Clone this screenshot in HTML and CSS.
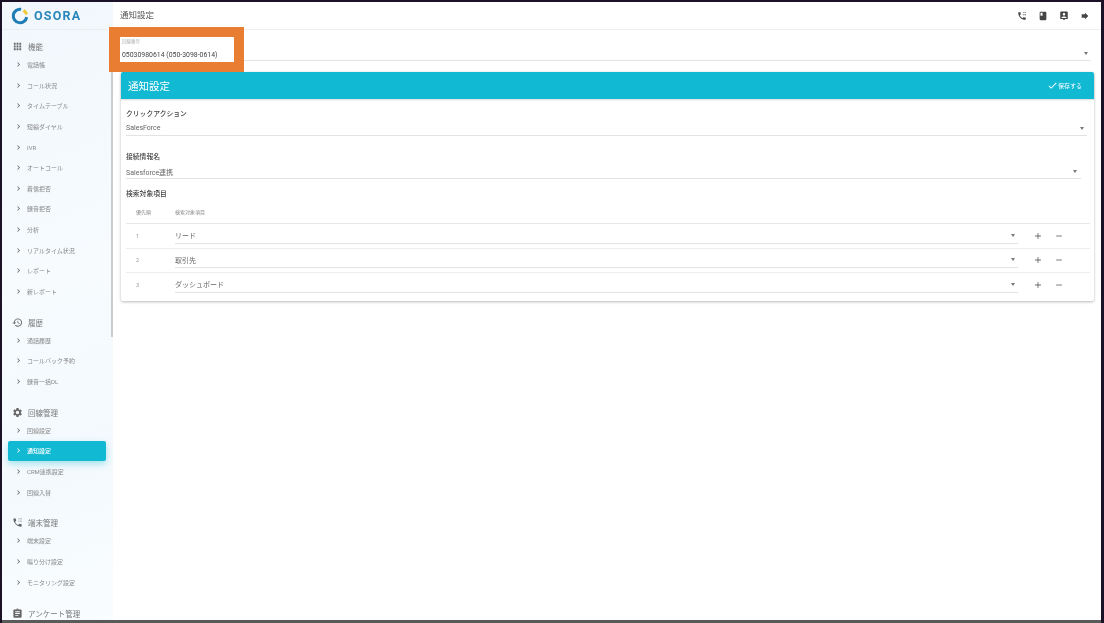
FILE: index.html
```html
<!DOCTYPE html>
<html lang="ja">
<head>
  <meta charset="UTF-8">
  <title>通知設定</title>
  <meta name="viewport" content="width=device-width, initial-scale=1.0">
  <link rel="stylesheet" href="styles.css">
</head>
<body>
  <svg class="defs" width="0" height="0">
    <symbol id="i-chev" viewBox="0 0 24 24"><path d="M10 6L8.59 7.41 13.17 12l-4.58 4.59L10 18l6-6z"/></symbol>
    <symbol id="i-apps" viewBox="0 0 24 24"><path d="M4 8h4V4H4v4zm6 12h4v-4h-4v4zm-6 0h4v-4H4v4zm0-6h4v-4H4v4zm6 0h4v-4h-4v4zm6-10v4h4V4h-4zm-6 4h4V4h-4v4zm6 6h4v-4h-4v4zm0 6h4v-4h-4v4z"/></symbol>
    <symbol id="i-history" viewBox="0 0 24 24"><path d="M13 3c-4.97 0-9 4.03-9 9H1l3.89 3.89.07.14L9 12H6c0-3.87 3.13-7 7-7s7 3.13 7 7-3.13 7-7 7c-1.93 0-3.68-.79-4.94-2.06l-1.42 1.42C8.27 19.99 10.51 21 13 21c4.97 0 9-4.03 9-9s-4.03-9-9-9zm-1 5v5l4.28 2.54.72-1.21-3.5-2.08V8H12z"/></symbol>
    <symbol id="i-gear" viewBox="0 0 24 24"><path d="M19.14 12.94c.04-.3.06-.61.06-.94 0-.32-.02-.64-.07-.94l2.03-1.58c.18-.14.23-.41.12-.61l-1.92-3.32c-.12-.22-.37-.29-.59-.22l-2.39.96c-.5-.38-1.03-.7-1.62-.94l-.36-2.54c-.04-.24-.24-.41-.48-.41h-3.84c-.24 0-.43.17-.47.41l-.36 2.54c-.59.24-1.13.57-1.62.94l-2.39-.96c-.22-.08-.47 0-.59.22L2.74 8.87c-.12.21-.08.47.12.61l2.03 1.58c-.05.3-.09.63-.09.94s.02.64.07.94l-2.03 1.58c-.18.14-.23.41-.12.61l1.92 3.32c.12.22.37.29.59.22l2.39-.96c.5.38 1.03.7 1.62.94l.36 2.54c.05.24.24.41.48.41h3.84c.24 0 .44-.17.47-.41l.36-2.54c.59-.24 1.13-.56 1.62-.94l2.39.96c.22.08.47 0 .59-.22l1.92-3.32c.12-.22.07-.47-.12-.61l-2.01-1.58zM12 15.6c-1.98 0-3.6-1.62-3.6-3.6s1.62-3.6 3.6-3.6 3.6 1.62 3.6 3.6-1.62 3.6-3.6 3.6z"/></symbol>
    <symbol id="i-phone" viewBox="0 0 24 24"><path d="M20 15.5c-1.25 0-2.45-.2-3.57-.57-.35-.11-.74-.03-1.02.24l-2.2 2.2c-2.83-1.44-5.15-3.75-6.59-6.59l2.2-2.21c.28-.26.36-.65.25-1C8.7 6.45 8.5 5.25 8.5 4c0-.55-.45-1-1-1H4c-.55 0-1 .45-1 1 0 9.39 7.61 17 17 17 .55 0 1-.45 1-1v-3.5c0-.55-.45-1-1-1zM14 3h2v2h-2zM18 3h3v2h-3zM14 8h2v2h-2zM18 8h3v2h-3z"/></symbol>
    <symbol id="i-clip" viewBox="0 0 24 24"><path d="M19 3h-4.18C14.4 1.84 13.3 1 12 1c-1.3 0-2.4.84-2.82 2H5c-1.1 0-2 .9-2 2v14c0 1.1.9 2 2 2h14c1.1 0 2-.9 2-2V5c0-1.1-.9-2-2-2zm-7 0c.55 0 1 .45 1 1s-.45 1-1 1-1-.45-1-1 .45-1 1-1zm2 14H7v-2h7v2zm3-4H7v-2h10v2zm0-4H7V7h10v2z"/></symbol>
    <symbol id="i-book" viewBox="0 0 24 24"><path d="M18 2H6c-1.1 0-2 .9-2 2v16c0 1.1.9 2 2 2h12c1.1 0 2-.9 2-2V4c0-1.1-.9-2-2-2zM6 4h5v8l-2.5-1.5L6 12V4z"/></symbol>
    <symbol id="i-contact" viewBox="0 0 24 24"><path d="M3 3v16h6l3 3 3-3h6V3c0-1.1-.9-2-2-2H5c-1.1 0-2 .9-2 2zm12 5c0 1.66-1.34 3-3 3s-3-1.34-3-3 1.34-3 3-3 3 1.34 3 3zm-9 8c0-2 4-3.1 6-3.1s6 1.1 6 3.1v1H6v-1z"/></symbol>
    <symbol id="i-forward" viewBox="0 0 24 24"><path d="M12 8V4l8 8-8 8v-4H4V8z"/></symbol>
    <symbol id="i-plus" viewBox="0 0 24 24"><path d="M19 13h-6v6h-2v-6H5v-2h6V5h2v6h6v2z"/></symbol>
    <symbol id="i-minus" viewBox="0 0 24 24"><path d="M19 13H5v-2h14v2z"/></symbol>
    <symbol id="i-check" viewBox="0 0 24 24"><path d="M9 16.17L4.83 12l-1.42 1.41L9 19 21 7l-1.41-1.41z"/></symbol>
  </svg>

  <div class="frame">
    <aside class="sidebar">
      <div class="logo">
        <svg class="logo-mark" viewBox="0 0 24 24">
          <path d="M13.5 3.1a9 9 0 1 0 7.4 10.4" fill="none" stroke="#1f7db5" stroke-width="4"/>
          <path d="M16.5 4.5a9 9 0 0 1 4.4 5.5" fill="none" stroke="#f3c93a" stroke-width="4"/>
        </svg>
        <span class="logo-text">OSORA</span>
      </div>
      <div class="nav-scroll">
        <div class="nav-section nav-section-first"><svg class="sec-icon"><use href="#i-apps"/></svg>機能</div>
        <a class="nav-item"><svg><use href="#i-chev"/></svg>電話帳</a>
        <a class="nav-item"><svg><use href="#i-chev"/></svg>コール状況</a>
        <a class="nav-item"><svg><use href="#i-chev"/></svg>タイムテーブル</a>
        <a class="nav-item"><svg><use href="#i-chev"/></svg>短縮ダイヤル</a>
        <a class="nav-item"><svg><use href="#i-chev"/></svg>IVR</a>
        <a class="nav-item"><svg><use href="#i-chev"/></svg>オートコール</a>
        <a class="nav-item"><svg><use href="#i-chev"/></svg>着信拒否</a>
        <a class="nav-item"><svg><use href="#i-chev"/></svg>録音拒否</a>
        <a class="nav-item"><svg><use href="#i-chev"/></svg>分析</a>
        <a class="nav-item"><svg><use href="#i-chev"/></svg>リアルタイム状況</a>
        <a class="nav-item"><svg><use href="#i-chev"/></svg>レポート</a>
        <a class="nav-item"><svg><use href="#i-chev"/></svg>新レポート</a>

        <div class="nav-section"><svg class="sec-icon"><use href="#i-history"/></svg>履歴</div>
        <a class="nav-item"><svg><use href="#i-chev"/></svg>通話履歴</a>
        <a class="nav-item"><svg><use href="#i-chev"/></svg>コールバック予約</a>
        <a class="nav-item"><svg><use href="#i-chev"/></svg>録音一括DL</a>

        <div class="nav-section"><svg class="sec-icon"><use href="#i-gear"/></svg>回線管理</div>
        <a class="nav-item"><svg><use href="#i-chev"/></svg>回線設定</a>
        <a class="nav-item active"><svg><use href="#i-chev"/></svg>通知設定</a>
        <a class="nav-item"><svg><use href="#i-chev"/></svg>CRM連携設定</a>
        <a class="nav-item"><svg><use href="#i-chev"/></svg>回線入替</a>

        <div class="nav-section"><svg class="sec-icon"><use href="#i-phone"/></svg>端末管理</div>
        <a class="nav-item"><svg><use href="#i-chev"/></svg>端末設定</a>
        <a class="nav-item"><svg><use href="#i-chev"/></svg>鳴り分け設定</a>
        <a class="nav-item"><svg><use href="#i-chev"/></svg>モニタリング設定</a>

        <div class="nav-section"><svg class="sec-icon"><use href="#i-clip"/></svg>アンケート管理</div>
      </div>
      <div class="scrollbar"></div>
    </aside>

    <main class="main">
      <header class="topbar">
        <h1>通知設定</h1>
        <div class="top-icons">
          <svg><use href="#i-phone"/></svg>
          <svg><use href="#i-book"/></svg>
          <svg><use href="#i-contact"/></svg>
          <svg><use href="#i-forward"/></svg>
        </div>
      </header>

      <div class="content">
        <div class="line-select">
          <span class="caret"></span>
        </div>

        <section class="card">
          <div class="card-head">
            <h2>通知設定</h2>
            <span class="save"><svg><use href="#i-check"/></svg>保存する</span>
          </div>
          <div class="card-body">
            <label class="field-label">クリックアクション</label>
            <div class="select select-a">SalesForce<span class="caret"></span></div>
            <label class="field-label label-b">接続情報名</label>
            <div class="select select-b">Salesforce連携<span class="caret"></span></div>
            <label class="field-label label-c">検索対象項目</label>

            <div class="t-head"><span class="col-no">優先順</span><span>検索対象項目</span></div>
            <div class="t-row">
              <span class="col-no">1</span>
              <div class="select row-select">リード<span class="caret"></span></div>
              <svg class="btn-icon"><use href="#i-plus"/></svg>
              <svg class="btn-icon"><use href="#i-minus"/></svg>
            </div>
            <div class="t-row">
              <span class="col-no">2</span>
              <div class="select row-select">取引先<span class="caret"></span></div>
              <svg class="btn-icon"><use href="#i-plus"/></svg>
              <svg class="btn-icon"><use href="#i-minus"/></svg>
            </div>
            <div class="t-row">
              <span class="col-no">3</span>
              <div class="select row-select">ダッシュボード<span class="caret"></span></div>
              <svg class="btn-icon"><use href="#i-plus"/></svg>
              <svg class="btn-icon"><use href="#i-minus"/></svg>
            </div>
          </div>
        </section>
      </div>
    </main>

    <div class="callout">
      <div class="callout-inner">
        <div class="callout-label">回線番号</div>
        <div class="callout-value">05030980614 (050-3098-0614)</div>
      </div>
    </div>
  </div>
</body>
</html>
```

FILE: styles.css
```css
html, body {
  margin: 0;
  padding: 0;
  height: 100%;
  overflow: hidden;
  background: #1c1228;
}
body {
  font-family: Roboto, "Noto Sans CJK JP", sans-serif;
  color: #555;
}
.defs {
  position: absolute;
}
.frame {
  position: relative;
  display: flex;
  box-sizing: border-box;
  width: 1099px;
  height: 621px;
  margin: 2px 0 0 2px;
  background: #fff;
  border-bottom: 3px solid #5a5a5a;
  overflow: hidden;
  filter: blur(0.4px);
}

/* sidebar */
.sidebar {
  position: relative;
  flex: none;
  width: 111px;
  background: linear-gradient(160deg, #f1f7fc 0%, #f7fbfe 45%, #f3f9fd 75%, #fafdff 100%);
}
.logo {
  display: flex;
  align-items: center;
  gap: 5px;
  height: 27px;
  margin: 0 6px 0 0;
  padding-left: 9px;
  border-bottom: 1px solid #e9eef1;
}
.logo-mark {
  width: 18px;
  height: 18px;
}
.logo-text {
  font-size: 12.5px;
  font-weight: 700;
  letter-spacing: 1.2px;
  color: #2a86ba;
}
.nav-section {
  display: flex;
  align-items: center;
  height: 15.5px;
  margin-top: 12.8px;
  padding-left: 10px;
  font-size: 7.5px;
  color: #777;
}
.nav-section-first {
  margin-top: 9px;
}
.sec-icon {
  width: 11px;
  height: 11px;
  margin-right: 5px;
  fill: #666;
}
.nav-item {
  display: flex;
  align-items: center;
  height: 20.6px;
  margin-right: 7px;
  margin-left: 6px;
  padding-left: 6px;
  font-size: 6px;
  color: #888;
  border-radius: 2px;
}
.nav-item svg {
  width: 9px;
  height: 9px;
  margin-right: 4px;
  fill: #666;
}
.nav-item.active {
  background: #12b9d3;
  color: #fff;
  font-weight: 500;
  box-shadow: 0 3px 6px rgba(18, 185, 211, 0.35);
}
.nav-item.active svg {
  fill: #fff;
}
.scrollbar {
  position: absolute;
  top: 28px;
  right: 0;
  width: 2px;
  height: 307px;
  background: #c9cdd0;
}

/* main */
.main {
  flex: 1;
  min-width: 0;
}
.topbar {
  display: flex;
  align-items: center;
  justify-content: space-between;
  height: 27px;
  padding: 0 11px 0 7px;
  border-bottom: 1px solid #eeeeee;
}
.topbar h1 {
  margin: 0 0 1px;
  font-size: 8.5px;
  line-height: 10px;
  font-weight: 400;
  color: #555;
}
.top-icons {
  display: flex;
  gap: 11px;
}
.top-icons svg {
  width: 10px;
  height: 10px;
  fill: #444;
}
.content {
  padding: 0 7px 0 8px;
}
.line-select {
  position: relative;
  height: 30px;
  margin-right: 3px;
  border-bottom: 1px solid #e3e3e3;
}
.line-select .caret {
  right: 3px;
  top: 22px;
}
.caret {
  position: absolute;
  width: 0;
  height: 0;
  border-left: 2.5px solid transparent;
  border-right: 2.5px solid transparent;
  border-top: 3px solid #777;
}
.card {
  margin-top: 11px;
  background: #fff;
  box-shadow: 0 1px 3px rgba(0, 0, 0, 0.28);
  border-radius: 2px;
}
.card-head {
  display: flex;
  align-items: center;
  justify-content: space-between;
  height: 27px;
  padding: 0 12px 0 7px;
  background: #12b9d3;
  color: #fff;
  border-radius: 2px 2px 0 0;
  box-shadow: 0 1px 2px rgba(0, 0, 0, 0.15);
}
.card-head h2 {
  margin: 0;
  font-size: 10.5px;
  font-weight: 400;
}
.save {
  display: flex;
  align-items: center;
  font-size: 6px;
}
.save svg {
  width: 11px;
  height: 11px;
  fill: #fff;
}
.card-body {
  padding: 10px 4px 4px 5px;
}
.field-label {
  display: block;
  height: 10px;
  font-size: 6.8px;
  line-height: 10px;
  font-weight: 500;
  color: #444;
}
.select {
  position: relative;
  display: flex;
  align-items: center;
  font-size: 7px;
  color: #666;
  border-bottom: 1px solid #e3e3e3;
}
.select-a {
  height: 14px;
  margin: 2px 3px 0 0;
}
.select-a .caret {
  right: 3px;
  top: 6px;
}
.select-b {
  height: 13px;
  margin: 3px 9px 0 0;
}
.select-b .caret {
  right: 4px;
  top: 5px;
}
.label-b {
  margin-top: 16px;
}
.label-c {
  margin-top: 10px;
}
.t-head {
  display: flex;
  align-items: center;
  height: 24px;
  font-size: 5px;
  color: #888;
  border-bottom: 1px solid #e8e8e8;
}
.col-no {
  flex: none;
  width: 49px;
  padding-left: 10px;
  box-sizing: border-box;
}
.t-row {
  display: flex;
  align-items: center;
  height: 23.5px;
  border-bottom: 1px solid #eeeeee;
}
.t-row:last-child {
  border-bottom: none;
}
.t-row .col-no {
  font-size: 5.5px;
  color: #999;
}
.row-select {
  flex: 1;
  height: 15px;
  margin-right: 15px;
}
.row-select .caret {
  right: 3px;
  top: 6px;
}
.btn-icon {
  flex: none;
  width: 10px;
  height: 10px;
  margin-right: 11px;
  fill: #666;
}
.btn-icon:last-child {
  margin-right: 26px;
}

/* annotation box drawn over the screenshot */
.callout {
  position: absolute;
  left: 107px;
  top: 25px;
  width: 135px;
  height: 45px;
  box-sizing: border-box;
  padding: 10px 10px 10px 11px;
  background: #e97e33;
}
.callout-inner {
  height: 25px;
  padding-left: 2px;
  background: #fff;
}
.callout-label {
  padding-top: 2px;
  height: 9px;
  font-size: 4.5px;
  line-height: 6px;
  color: #aaa;
}
.callout-value {
  font-size: 6.9px;
  line-height: 14px;
  color: #444;
}
```
